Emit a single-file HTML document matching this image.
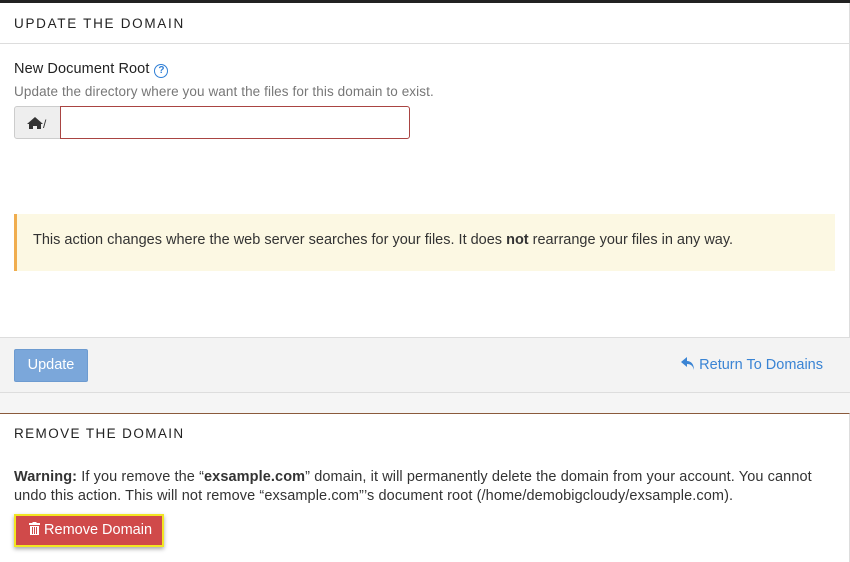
<!DOCTYPE html>
<html><head><style>
*{margin:0;padding:0;box-sizing:border-box}
body{width:850px;height:562px;overflow:hidden;background:#f5f5f5;font-family:"Liberation Sans",sans-serif;color:#333;position:relative}
.top{position:absolute;left:0;top:0;width:850px;height:3px;background:#222}
.p1{position:absolute;left:0;top:3px;width:850px;height:390px;background:#fff;border-right:1px solid #ddd}
.h1{position:absolute;left:14px;top:13px;font-size:13.5px;letter-spacing:1.7px;color:#222}
.hl{position:absolute;left:0;top:40px;width:850px;height:1px;background:#ddd}
.lab{position:absolute;left:14px;top:58px;font-size:14.5px;color:#222;letter-spacing:0.1px}
.q{display:inline-block;width:14px;height:14px;border:1.5px solid #2f7fd6;border-radius:50%;font-size:10px;color:#2f7fd6;text-align:center;line-height:11px;font-weight:bold;vertical-align:0px;margin-left:5px}
.hint{position:absolute;left:14px;top:81px;font-size:13.5px;color:#777;letter-spacing:0.1px}
.ad{position:absolute;left:14px;top:103px;width:47px;height:33px;background:#eee;border:1px solid #ccc;border-radius:3px 0 0 3px}
.in{position:absolute;left:60px;top:103px;width:350px;height:33px;border:1px solid #a94442;border-radius:0 3px 3px 0;background:#fff}
.warn{position:absolute;left:14px;top:211px;width:821px;height:57px;background:#fcf8e3;border-left:3px solid #f0ad4e;font-size:14.5px;color:#333;padding:18px 0 0 16px;letter-spacing:0}
.foot{position:absolute;left:0;top:334px;width:850px;height:56px;background:#f3f3f3;border-top:1px solid #ddd;border-bottom:1px solid #ddd}
.btn{position:absolute;left:14px;top:11px;width:74px;height:33px;background:#7ba7da;border:1px solid #6d9bd0;border-radius:2px;color:#fff;font-size:14.5px;text-align:center;line-height:31px}
.ret{position:absolute;right:27px;top:19px;font-size:14.5px;color:#3a84d4}
.p2{position:absolute;left:0;top:413px;width:850px;height:149px;background:#fff;border-top:1px solid #8a5a3c;border-right:1px solid #ddd}
.h2{position:absolute;left:14px;top:12px;font-size:13.5px;letter-spacing:1.4px;color:#222}
.txt{position:absolute;left:14px;top:54px;font-size:14.5px;line-height:19px;color:#333;width:830px;letter-spacing:0.1px}
.rb{position:absolute;left:14px;top:100px;width:150px;height:33px;background:#d04a4a;border:2px solid #f2e523;color:#fff;font-size:14.5px;line-height:29px;padding-left:13px;box-shadow:0 2px 4px rgba(0,0,0,.35)}
</style></head><body>
<div class="top"></div>
<div class="p1">
<div class="h1">UPDATE THE DOMAIN</div>
<div class="hl"></div>
<div class="lab">New Document Root<span class="q">?</span></div>
<div class="hint">Update the directory where you want the files for this domain to exist.</div>
<div class="ad"><svg width="47" height="31" viewBox="0 0 47 31"><path d="M12 17 L20 10 L28 17 L26 17 L26 22 L22 22 L22 19 L18 19 L18 22 L14 22 L14 17 Z" fill="#333"/><text x="28" y="21" font-size="12" fill="#333" font-family="Liberation Sans">/</text></svg></div>
<div class="in"></div>
<div class="warn">This action changes where the web server searches for your files. It does <b>not</b> rearrange your files in any way.</div>
<div class="foot"><div class="btn">Update</div><div class="ret"><svg width="14" height="13" viewBox="0 0 14 13" style="vertical-align:-1px"><path d="M6 0 L0 5 L6 10 L6 7 C10 7 12 9 13 13 C13 7 10 4 6 4 Z" fill="#3a84d4"/></svg> Return To Domains</div></div>
</div>
<div class="p2">
<div class="h2">REMOVE THE DOMAIN</div>
<div class="txt"><b>Warning:</b> If you remove the “<b>exsample.com</b>” domain, it will permanently delete the domain from your account. You cannot undo this action. This will not remove “exsample.com”’s document root (/home/demobigcloudy/exsample.com).</div>
<div class="rb"><svg width="11" height="13" viewBox="0 0 11 13" style="vertical-align:-1px"><rect x="0" y="1" width="11" height="2" fill="#fff"/><rect x="3.5" y="0" width="4" height="2" fill="#fff"/><path d="M1 4h9v9H1z M3 5v7h1V5z M5 5v7h1V5z M7 5v7h1V5z" fill="#fff" fill-rule="evenodd"/></svg> Remove Domain</div>
</div>
</body></html>
